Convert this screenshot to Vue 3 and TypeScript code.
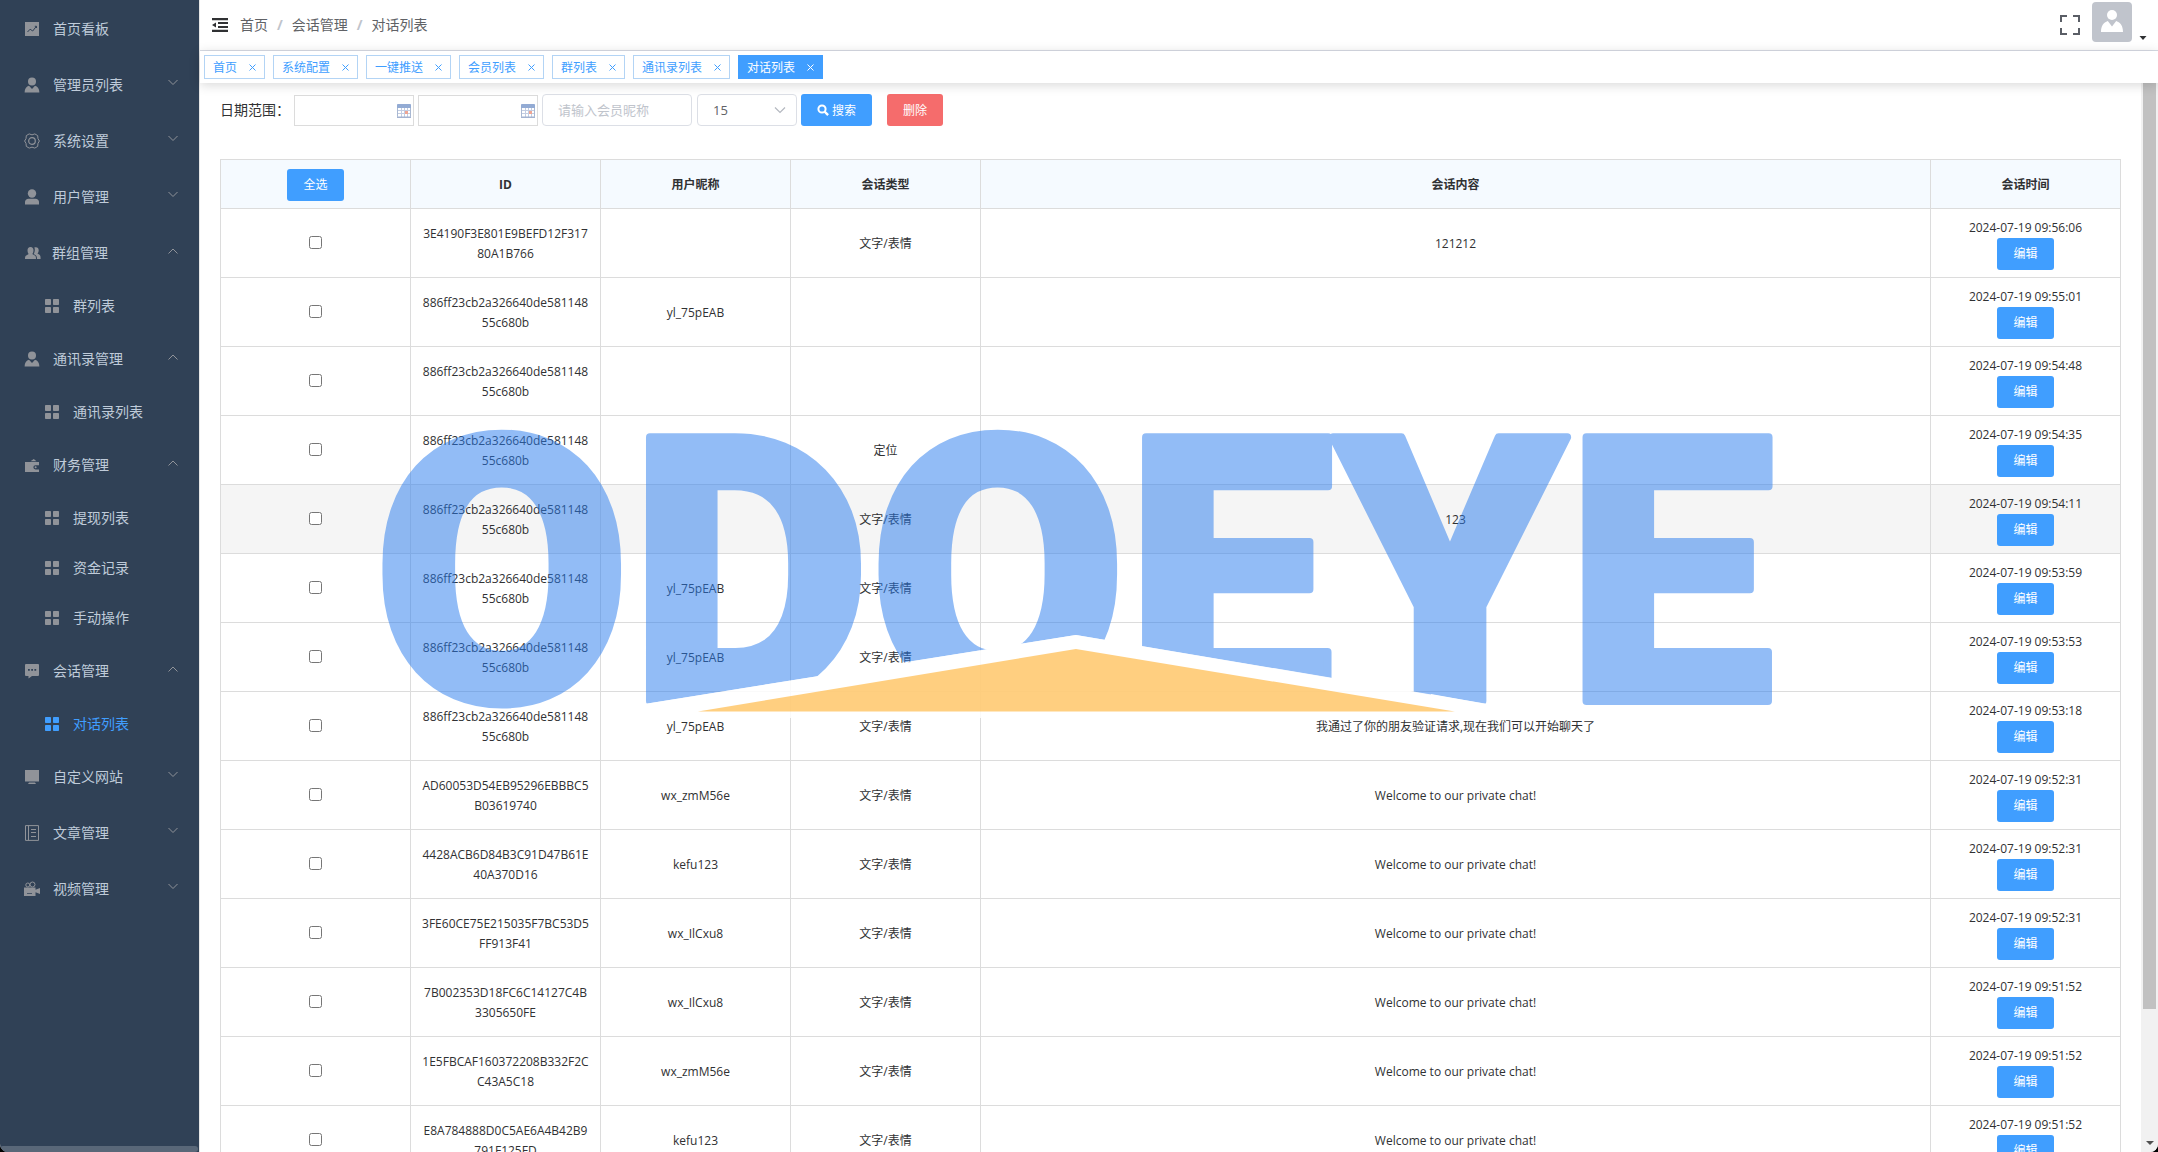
<script setup lang="ts">
import { ref } from 'vue'

interface MenuItem {
  title: string
  icon: string
  arrow?: 'up' | 'down'
  child?: boolean
  active?: boolean
}

interface Message {
  id: [string, string]
  nickname: string
  type: string
  content: string
  time: string
}

const menu: MenuItem[] = [
  { title: '首页看板', icon: 'marketing' },
  { title: '管理员列表', icon: 'custom', arrow: 'down' },
  { title: '系统设置', icon: 'setting', arrow: 'down' },
  { title: '用户管理', icon: 'user', arrow: 'down' },
  { title: '群组管理', icon: 'group', arrow: 'up' },
  { title: '群列表', icon: 'menu', child: true },
  { title: '通讯录管理', icon: 'custom', arrow: 'up' },
  { title: '通讯录列表', icon: 'menu', child: true },
  { title: '财务管理', icon: 'wallet', arrow: 'up' },
  { title: '提现列表', icon: 'menu', child: true },
  { title: '资金记录', icon: 'menu', child: true },
  { title: '手动操作', icon: 'menu', child: true },
  { title: '会话管理', icon: 'comment', arrow: 'up' },
  { title: '对话列表', icon: 'menu', child: true, active: true },
  { title: '自定义网站', icon: 'platform', arrow: 'down' },
  { title: '文章管理', icon: 'notebook', arrow: 'down' },
  { title: '视频管理', icon: 'camera', arrow: 'down' },
]

const tags = ['首页', '系统配置', '一键推送', '会员列表', '群列表', '通讯录列表', '对话列表']
const activeTag = ref('对话列表')
const columns = ['ID', '用户昵称', '会话类型', '会话内容', '会话时间']

const keyword = ref('')
const pageSize = ref('15')
const selected = ref<number[]>([])

const peer: [string, string] = ['886ff23cb2a326640de581148', '55c680b']
const chat = '文字/表情'
const welcome = 'Welcome to our private chat!'
const day = '2024-07-19 '

const rows: Message[] = [
  { id: ['3E4190F3E801E9BEFD12F317', '80A1B766'], nickname: '', type: chat, content: '121212', time: '09:56:06' },
  { id: peer, nickname: 'yl_75pEAB', type: '', content: '', time: '09:55:01' },
  { id: peer, nickname: '', type: '', content: '', time: '09:54:48' },
  { id: peer, nickname: '', type: '定位', content: '', time: '09:54:35' },
  { id: peer, nickname: '', type: chat, content: '123', time: '09:54:11' },
  { id: peer, nickname: 'yl_75pEAB', type: chat, content: '', time: '09:53:59' },
  { id: peer, nickname: 'yl_75pEAB', type: chat, content: '', time: '09:53:53' },
  { id: peer, nickname: 'yl_75pEAB', type: chat, content: '我通过了你的朋友验证请求,现在我们可以开始聊天了', time: '09:53:18' },
  { id: ['AD60053D54EB95296EBBBC5', 'B03619740'], nickname: 'wx_zmM56e', type: chat, content: welcome, time: '09:52:31' },
  { id: ['4428ACB6D84B3C91D47B61E', '40A370D16'], nickname: 'kefu123', type: chat, content: welcome, time: '09:52:31' },
  { id: ['3FE60CE75E215035F7BC53D5', 'FF913F41'], nickname: 'wx_IlCxu8', type: chat, content: welcome, time: '09:52:31' },
  { id: ['7B002353D18FC6C14127C4B', '3305650FE'], nickname: 'wx_IlCxu8', type: chat, content: welcome, time: '09:51:52' },
  { id: ['1E5FBCAF160372208B332F2C', 'C43A5C18'], nickname: 'wx_zmM56e', type: chat, content: welcome, time: '09:51:52' },
  { id: ['E8A784888D0C5AE6A4B42B9', '791F125FD'], nickname: 'kefu123', type: chat, content: welcome, time: '09:51:52' },
]

function selectAll() {
  selected.value = selected.value.length === rows.length ? [] : rows.map((_, i) => i)
}
</script>

<template>
  <div class="app">
    <aside class="sidebar">
      <nav>
        <a
          v-for="(item, i) in menu"
          :key="i"
          href="#"
          class="item"
          :class="{ child: item.child, active: item.active, group: item.icon === 'group' }"
        >
          <svg class="icon" viewBox="0 0 16 16" aria-hidden="true">
            <template v-if="item.icon === 'marketing'">
              <path fill="currentColor" d="M1 1h14v14H1z" />
              <path fill="none" stroke="#304156" d="M3.500 11l2.600-2.800 2.600 1.800 3.600-4.600M10.800 5.300h1.700v1.700" />
            </template>
            <template v-else-if="item.icon === 'custom'">
              <circle cx="8" cy="4.500" r="4" fill="currentColor" />
              <path fill="currentColor" d="M.6 15.500c0-4 1.800-6 4.400-6.800L8 12l3-3.300c2.600.8 4.400 2.800 4.400 6.800z" />
            </template>
            <template v-else-if="item.icon === 'setting'">
              <path fill="none" stroke="currentColor" d="M5.200.9Q8 2.800 10.800.9L13.700 2.600Q13.400 5.900 15.400 8Q13.400 10.100 13.700 13.400L10.800 15.100Q8 13.200 5.200 15.100L2.300 13.400Q2.600 10.100.6 8Q2.600 5.900 2.300 2.600z" />
              <circle cx="8" cy="8" r="3.300" fill="none" stroke="currentColor" stroke-width="1.200" />
            </template>
            <template v-else-if="item.icon === 'user'">
              <circle cx="8" cy="4.500" r="4.200" fill="currentColor" />
              <path fill="currentColor" d="M1 15.500V13c0-2 1.500-3.300 3.500-3.300h7c2 0 3.500 1.300 3.500 3.300v2.500z" />
            </template>
            <template v-else-if="item.icon === 'group'">
              <path fill="currentColor" d="M6.500 2c2 0 3 1.300 3 3.200S8.800 8.500 8.300 9l2.500 1.500c1 .6 1.200 1.500 1.200 3.500H1c0-2 .2-2.900 1.200-3.500L4.700 9c-.5-.5-1.200-1.900-1.200-3.800s1-3.200 3-3.200z" />
              <path fill="currentColor" d="M10.300 2.500c2.400-1 4.400.2 4.400 2.700 0 1.500-.6 2.600-1.200 3.300l2 1.300c1 .6 1.100 2.200 1.100 4.200h-3.600c0-2.500-.5-3.500-3.300-4.900.8-1.500 1.700-4.900.6-6.600z" />
            </template>
            <template v-else-if="item.icon === 'menu'">
              <path fill="currentColor" d="M1 1.800Q1 1 1.800 1H6.200Q7 1 7 1.800V6.200Q7 7 6.200 7H1.800Q1 7 1 6.200zM9 1.800Q9 1 9.800 1h4.400q.8 0 .8.8v4.400q0 .8-.8.8H9.800Q9 7 9 6.200zM1 9.800Q1 9 1.800 9h4.400q.8 0 .8.8v4.400q0 .8-.8.8H1.800q-.8 0-.8-.8zM9 9.800Q9 9 9.800 9h4.400q.8 0 .8.8v4.400q0 .8-.8.8H9.800q-.8 0-.8-.8z" />
            </template>
            <template v-else-if="item.icon === 'wallet'">
              <path fill="currentColor" d="M1 5h14v3.200h-3.500a2 2 0 0 0 0 4.300H15V15H1zM6.500 4.300L9.800 2l2.700 2.300z" />
              <circle cx="11.600" cy="10.300" r="1" fill="currentColor" />
            </template>
            <template v-else-if="item.icon === 'comment'">
              <path fill="currentColor" d="M1 2q0-1 1-1h12q1 0 1 1v10q0 1-1 1H8l-3.500 2.500V13H2q-1 0-1-1z" />
              <path fill="#304156" d="M4 6h1.800v1.800H4zM7.200 6H9v1.800H7.200zM10.400 6h1.800v1.800h-1.800z" />
            </template>
            <template v-else-if="item.icon === 'platform'">
              <path fill="currentColor" d="M1 1h14v11.500H1zM5 13.500h6l1 1.500H4z" />
            </template>
            <template v-else-if="item.icon === 'notebook'">
              <path fill="none" stroke="currentColor" d="M1.500.6h13v14.800h-13zM4.500.6v14.800M7 4.500h5M7 7.500h5M7 11.500h5" />
            </template>
            <template v-else>
              <circle cx="3.800" cy="4" r="2" fill="none" stroke="currentColor" />
              <circle cx="8.500" cy="3.500" r="2.500" fill="none" stroke="currentColor" />
              <path fill="currentColor" fill-rule="evenodd" d="M0 6.500h11.500v2.200L16 7v6l-4.500-1.700V15H0zM3 12.300v.8h5v-.8z" />
            </template>
          </svg>
          <span>{{ item.title }}</span>
          <svg v-if="item.arrow" class="arrow" viewBox="0 0 12 12" aria-hidden="true">
            <path v-if="item.arrow === 'down'" fill="none" stroke="currentColor" d="M1.500 3l4.500 4.500L10.500 3" />
            <path v-else fill="none" stroke="currentColor" d="M1.500 8.500L6 4l4.500 4.500" />
          </svg>
        </a>
      </nav>
      <div class="side-scroll"></div>
    </aside>

    <div class="main">
      <header class="navbar">
        <button class="bare" type="button" aria-label="折叠菜单">
          <svg width="16" height="16" viewBox="0 0 16 16">
            <path fill="#303133" d="M0 1h16v2.200H0zM6 5h10v2H6zM6 9h10v2H6zM0 12.800h16V15H0zM0 8l4-2.500v5z" />
          </svg>
        </button>
        <nav class="crumbs">
          <a href="#">首页</a><b>/</b><a href="#">会话管理</a><b>/</b><span>对话列表</span>
        </nav>
        <div class="tools">
          <button class="bare" type="button" aria-label="全屏">
            <svg width="20" height="20" viewBox="0 0 20 20">
              <path fill="none" stroke="#5a5e66" stroke-width="2" d="M1 7V1h6M13 1h6v6M19 13v6h-6M7 19H1v-6" />
            </svg>
          </button>
          <button class="bare user" type="button" aria-label="用户">
            <svg class="avatar" viewBox="0 0 40 40">
              <circle cx="20" cy="13" r="5" fill="#fff" />
              <path fill="#fff" d="M9 30c0-6 2.500-9.500 6.800-11L20 24.500l4.200-5.500c4.300 1.500 6.800 5 6.800 11z" />
            </svg>
            <svg width="8" height="8" viewBox="0 0 8 8"><path fill="#303133" d="M.5 2h7L4 6z" /></svg>
          </button>
        </div>
      </header>

      <div class="tags">
        <a v-for="tag in tags" :key="tag" href="#" class="tag" :class="{ on: tag === activeTag }">
          <span>{{ tag }}</span>
          <svg width="7" height="7" viewBox="0 0 7 7"><path fill="none" stroke="currentColor" d="M.5.5l6 6M6.500.5l-6 6" /></svg>
        </a>
      </div>

      <div class="body">
        <main class="page">
          <form class="filters" @submit.prevent>
            <label for="from">日期范围：</label>
            <span v-for="name in ['from', 'to']" :key="name" class="date">
              <input :id="name" type="text" :aria-label="name === 'to' ? '结束日期' : undefined" />
              <svg width="14" height="14" viewBox="0 0 14 14" aria-hidden="true">
                <rect x=".5" y=".5" width="13" height="13" rx="1" fill="#fff" stroke="#a9b8d2" />
                <path fill="#93abd4" d="M0 1q0-1 1-1h12q1 0 1 1v3H0z" />
                <path fill="none" stroke="#c3cde2" d="M1 6.500h12M1 9.500h12M4.500 4v9M7.500 4v9M10.500 4v9" />
                <path fill="#efa593" d="M8 7h3v3H8z" />
                <path fill="#a3b2d0" d="M0 12.500h14V14H0z" />
              </svg>
            </span>
            <input v-model="keyword" class="text" type="text" placeholder="请输入会员昵称" aria-label="会员昵称" />
            <span class="pick">
              <select v-model="pageSize" aria-label="每页条数">
                <option>15</option>
                <option>30</option>
                <option>50</option>
              </select>
              <svg width="12" height="12" viewBox="0 0 12 12" aria-hidden="true">
                <path fill="none" stroke="#b4b8c0" stroke-width="1.200" d="M1 3.500l5 5 5-5" />
              </svg>
            </span>
            <button class="btn search" type="submit">
              <svg width="12" height="12" viewBox="0 0 12 12" aria-hidden="true">
                <circle cx="5" cy="5" r="3.600" fill="none" stroke="#fff" stroke-width="2" />
                <path stroke="#fff" stroke-width="2.400" d="M7.500 7.500l3.600 3.600" />
              </svg>
              搜索
            </button>
            <button class="btn danger" type="button">删除</button>
          </form>

          <table>
            <thead>
              <tr>
                <th class="narrow"><button class="btn" type="button" @click="selectAll">全选</button></th>
                <th v-for="c in columns" :key="c" :class="{ narrow: c !== '会话内容' }">{{ c }}</th>
              </tr>
            </thead>
            <tbody>
              <tr v-for="(row, i) in rows" :key="i" :class="{ hover: i === 4 }">
                <td><input v-model="selected" type="checkbox" :value="i" :aria-label="'选择第' + (i + 1) + '行'" /></td>
                <td>{{ row.id[0] }}<br />{{ row.id[1] }}</td>
                <td>{{ row.nickname }}</td>
                <td>{{ row.type }}</td>
                <td>{{ row.content }}</td>
                <td>
                  <div>{{ day + row.time }}</div>
                  <button class="btn" type="button">编辑</button>
                </td>
              </tr>
            </tbody>
          </table>
        </main>
        <div class="scrollbar">
          <div class="thumb"></div>
          <svg width="8" height="8" viewBox="0 0 8 8"><path fill="#505050" d="M0 2h8L4 6z" /></svg>
        </div>
      </div>
    </div>

    <div class="watermark" aria-hidden="true">
      <svg viewBox="3 0 1390 304">
        <defs>
          <mask id="above-roof" maskUnits="userSpaceOnUse" x="-20" y="-20" width="1440" height="340">
            <path fill="#fff" d="M-20-20h1440v340H-20z" />
            <path fill="#000" d="M245 283L695 211l450 76v43H245z" />
            <path fill="#fff" d="M1060-20h360v340h-360z" />
            <path fill="#000" d="M1050 270l110 20v30h-110z" />
          </mask>
        </defs>
        <g mask="url(#above-roof)" opacity=".5">
          <text x="693" y="277" text-anchor="middle" class="mark">ODOEYE</text>
        </g>
        <path fill="#fff" fill-opacity=".85" d="M245 283L695 211l495 83H245z" />
        <path fill="#ffa002" fill-opacity=".5" d="M317 287.500L695 225l379 62.500z" />
      </svg>
    </div>
  </div>
</template>

<style>
body {
  margin: 0;
  background: #000;
}
</style>

<style scoped>
.app {
  display: flex;
  height: 100vh;
  overflow: hidden;
  background: #fff;
  border-radius: 0 0 8px 8px;
  color: #303133;
  font-family: 'Open Sans', 'Noto Sans CJK SC', sans-serif;
  font-size: 12px;
}
* {
  box-sizing: border-box;
}
a {
  color: inherit;
  text-decoration: none;
}
button,
input,
select {
  font: inherit;
}
svg {
  display: block;
  flex: none;
}

.sidebar {
  display: flex;
  flex: none;
  flex-direction: column;
  justify-content: space-between;
  width: 200px;
  background: #304156;
  border-right: 1px solid #e6e6e6;
}
.item {
  display: flex;
  align-items: center;
  gap: 13px;
  height: 56px;
  padding: 0 20px 0 24px;
  color: #bfcbd9;
  font-size: 14px;
}
.item.group {
  gap: 12px;
}
.item.child {
  height: 50px;
  padding-left: 44px;
}
.icon {
  width: 16px;
  height: 16px;
  margin-top: 2px;
  color: #909399;
  overflow: visible;
}
.item.active,
.item.active .icon {
  color: #409eff;
}
.arrow {
  width: 12px;
  height: 12px;
  margin: 0 0 2px auto;
  color: #909399;
}
.side-scroll {
  height: 6px;
  margin-right: 1px;
  background: #596778;
  border-radius: 3px;
}

.main {
  display: flex;
  flex: 1;
  flex-direction: column;
  min-width: 0;
}
.navbar {
  display: flex;
  flex: none;
  align-items: center;
  height: 51px;
  padding: 0 11px 0 12px;
  border-bottom: 1px solid #d8dce5;
}
.bare {
  display: flex;
  padding: 0;
  border: 0;
  background: none;
}
.crumbs {
  margin: 0 0 2px 12px;
  color: #606266;
  font-size: 14px;
}
.crumbs b {
  margin: 0 9px;
  color: #c0c4cc;
}
.tools {
  display: flex;
  align-items: center;
  gap: 12px;
  margin-left: auto;
}
.user {
  align-items: flex-end;
  gap: 7px;
  margin-bottom: 6px;
}
.avatar {
  width: 40px;
  height: 40px;
  background: #c0c4cc;
  border-radius: 4px;
}

.tags {
  display: flex;
  flex: none;
  gap: 8px;
  height: 32px;
  padding: 4px;
  background: #fff;
  box-shadow: 0 2px 12px rgba(0, 0, 0, 0.16);
  z-index: 1;
}
.tag {
  display: flex;
  align-items: center;
  gap: 12px;
  height: 24px;
  padding: 0 8px;
  border: 1px solid #b3d4f5;
  color: #409eff;
}
.tag.on {
  background: #409eff;
  border-color: #409eff;
  color: #fff;
}

.body {
  display: flex;
  flex: 1;
  min-height: 0;
}
.page {
  flex: 1;
  min-width: 0;
  padding: 11px 20px 0;
  overflow: hidden;
}
.filters {
  display: flex;
  align-items: center;
  height: 32px;
  margin-bottom: 33px;
}
.filters label {
  width: 74px;
  padding-bottom: 2px;
  font-size: 14px;
  white-space: nowrap;
}
.date {
  display: flex;
  align-items: center;
  width: 120px;
  height: 31px;
  margin: 1px 4px 0 0;
  padding-right: 2px;
  border: 1px solid #dcdcdc;
}
.date input {
  flex: 1;
  min-width: 0;
  height: 100%;
  border: 0;
}
.text {
  width: 150px;
  height: 32px;
  margin-right: 5px;
  padding: 0 15px;
  border: 1px solid #dcdfe6;
  border-radius: 4px;
  font-size: 13px;
}
.text::placeholder {
  color: #c0c4cc;
}
.pick {
  display: grid;
  align-items: center;
  width: 100px;
  height: 32px;
  margin-right: 4px;
}
.pick > * {
  grid-area: 1 / 1;
}
.pick select {
  width: 100%;
  height: 32px;
  padding: 0 15px;
  appearance: none;
  background: #fff;
  border: 1px solid #dcdfe6;
  border-radius: 4px;
  color: #606266;
  font-size: 13px;
}
.pick svg {
  margin-right: 11px;
  justify-self: end;
  pointer-events: none;
}
.btn {
  height: 32px;
  padding: 0 16px;
  background: #409eff;
  border: 0;
  border-radius: 3px;
  color: #fff;
  font-size: 12px;
  font-weight: 400;
  vertical-align: top;
}
.search {
  display: flex;
  align-items: center;
  gap: 3px;
  margin-right: 15px;
}
.danger {
  background: #f56c6c;
}

table {
  width: 100%;
  table-layout: fixed;
  border-collapse: collapse;
  line-height: 20px;
  text-align: center;
}
th,
td {
  padding: 9px 0 7px;
  border: 1px solid #dcdcdc;
}
th {
  background: #f5faff;
}
.narrow {
  width: 10%;
}
td input {
  display: block;
  width: 13px;
  height: 13px;
  margin: 0 auto 4px;
}
.hover {
  background: #f5f5f5;
}

.scrollbar {
  display: flex;
  flex: none;
  flex-direction: column;
  align-items: center;
  justify-content: space-between;
  width: 17px;
  padding-bottom: 5px;
  background: #f1f1f1;
}
.thumb {
  width: 13px;
  height: 87%;
  background: #c1c1c1;
}

.watermark {
  position: fixed;
  inset: 0;
  z-index: 2;
  display: flex;
  align-items: center;
  justify-content: center;
  pointer-events: none;
}
.watermark svg {
  width: 64.4%;
  overflow: visible;
}
.mark {
  fill: #277bed;
  stroke: #277bed;
  stroke-width: 8px;
  stroke-linejoin: round;
  font-family: Roboto, sans-serif;
  font-size: 371px;
  font-weight: 900;
}
</style>
